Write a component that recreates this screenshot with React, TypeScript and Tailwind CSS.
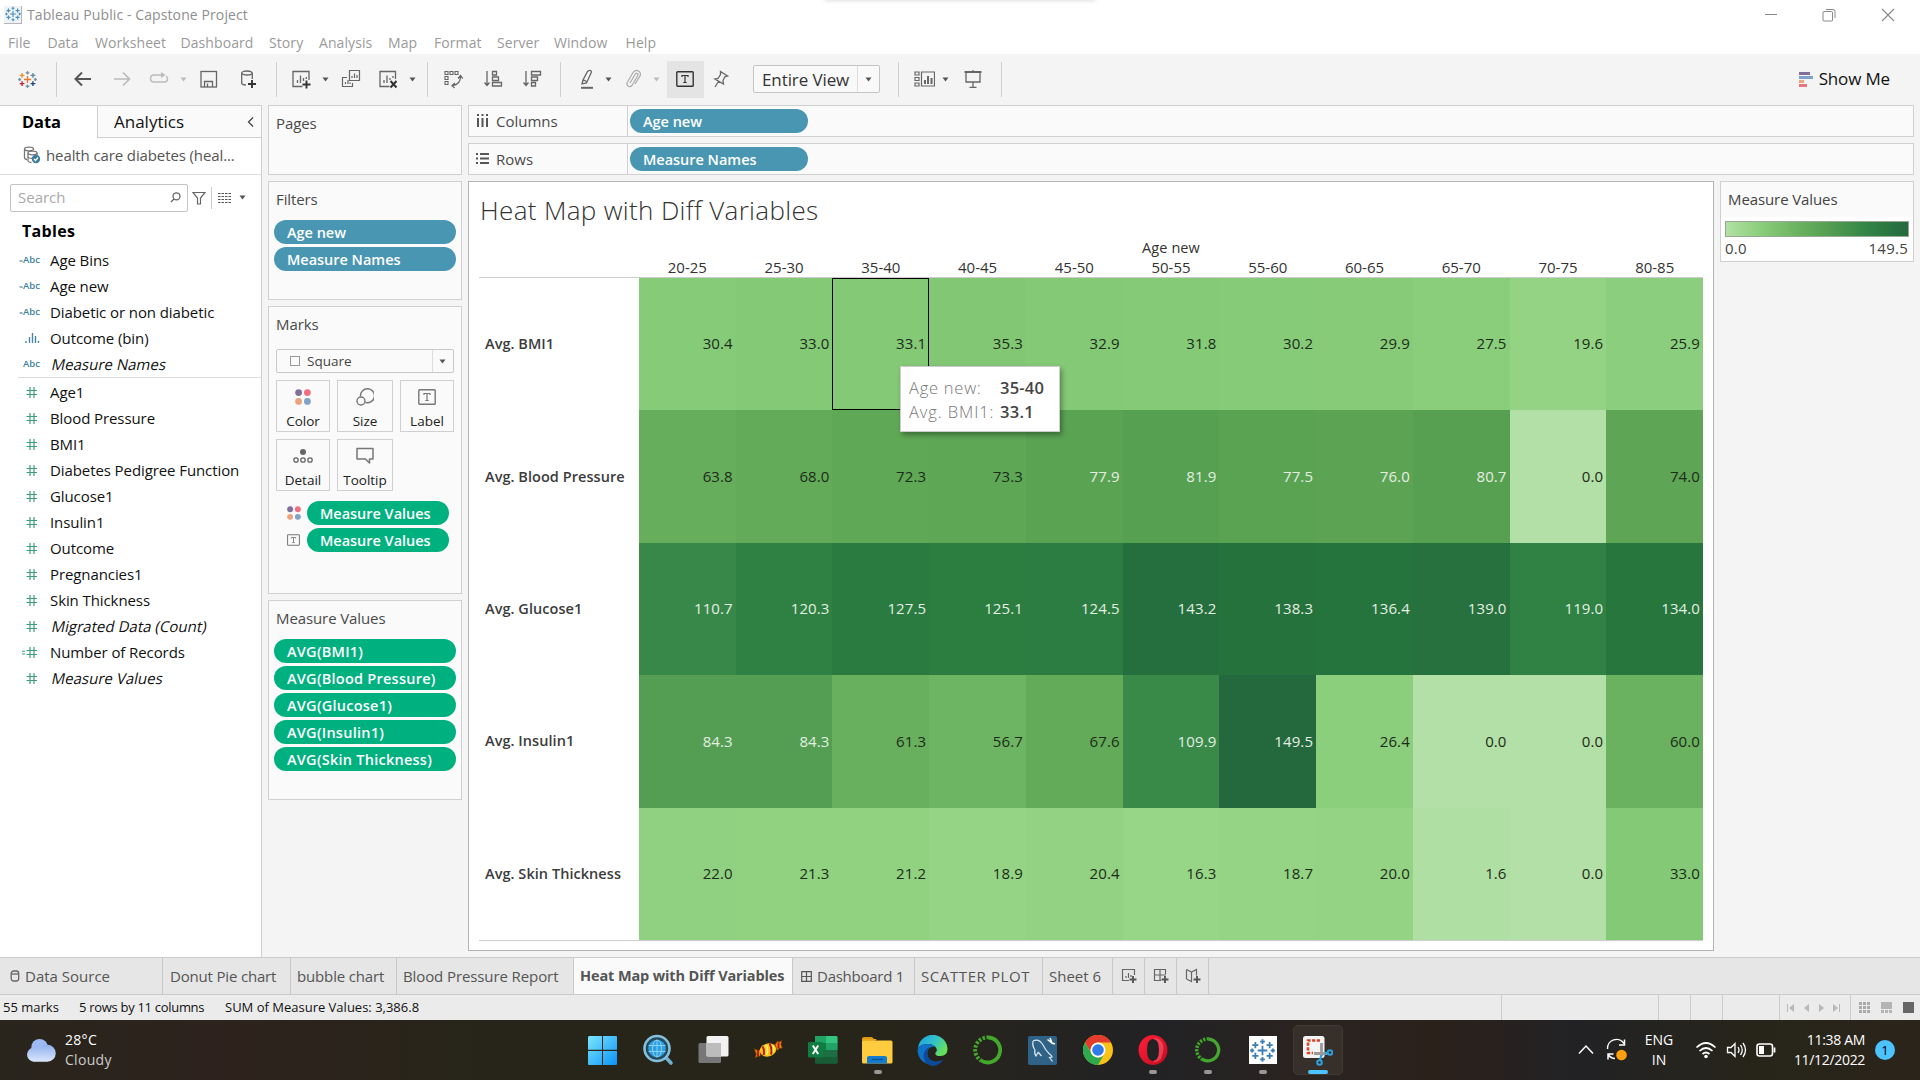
import React from "react";

type Kids = { children?: React.ReactNode };

/* ---------- data ---------- */
const ages = ["20-25", "25-30", "35-40", "40-45", "45-50", "50-55", "55-60", "60-65", "65-70", "70-75", "80-85"];
const rows: { name: string; v: number[] }[] = [
  { name: "Avg. BMI1", v: [30.4, 33.0, 33.1, 35.3, 32.9, 31.8, 30.2, 29.9, 27.5, 19.6, 25.9] },
  { name: "Avg. Blood Pressure", v: [63.8, 68.0, 72.3, 73.3, 77.9, 81.9, 77.5, 76.0, 80.7, 0.0, 74.0] },
  { name: "Avg. Glucose1", v: [110.7, 120.3, 127.5, 125.1, 124.5, 143.2, 138.3, 136.4, 139.0, 119.0, 134.0] },
  { name: "Avg. Insulin1", v: [84.3, 84.3, 61.3, 56.7, 67.6, 109.9, 149.5, 26.4, 0.0, 0.0, 60.0] },
  { name: "Avg. Skin Thickness", v: [22.0, 21.3, 21.2, 18.9, 20.4, 16.3, 18.7, 20.0, 1.6, 0.0, 33.0] },
];
const ramp = [
  "b3e0a6", "a5db96", "98d687", "8ed07f", "85ca77", "7dc370", "75bc69", "6eb663", "67af5c", "61a956",
  "59a253", "519c51", "49964f", "428f4d", "398949", "308344", "2b7c40", "27763d", "256f3d", "24693d",
];
function heat(v: number) {
  const t = (v / 149.5) * (ramp.length - 1);
  const i = Math.min(ramp.length - 2, Math.floor(t));
  const f = t - i;
  const ch = (h: string, k: number) => parseInt(h.slice(k * 2, k * 2 + 2), 16);
  const c = [0, 1, 2].map((k) => Math.round(ch(ramp[i], k) * (1 - f) + ch(ramp[i + 1], k) * f));
  return `rgb(${c.join(",")})`;
}

/* ---------- small pieces ---------- */
const Caret = ({ c = "#555" }: { c?: string }) => (
  <svg width="7" height="5" viewBox="0 0 7 5" className="shrink-0"><path d="M0.5 0.5h6L3.5 4.5z" fill={c} /></svg>
);
const Sep = () => <div className="h-[35px] w-px bg-[#cfcfcf]" />;
const Ico = ({ w = 20, h = 20, s = "#666", children }: Kids & { w?: number; h?: number; s?: string }) => (
  <svg width={w} height={h} viewBox={`0 0 ${w} ${h}`} fill="none" stroke={s} strokeWidth="1.3" className="shrink-0">{children}</svg>
);
const Pill = ({ cls, children }: Kids & { cls: string }) => (
  <div className={"flex h-6 items-center rounded-full pt-px text-[14.5px] font-semibold leading-6 tracking-[-0.02px] text-white " + cls}>{children}</div>
);
const Card = ({ cls, title, children }: Kids & { cls: string; title: string }) => (
  <div className={"border border-[#d0d0d0] bg-[#fafafa] " + cls}>
    <div className="h-[38px] pl-[7px] text-[15px] leading-[34px] tracking-[-0.1px] text-[#4a4a4a]">{title}</div>
    {children}
  </div>
);
const Dots = ({ w = 16 }: { w?: number }) => (
  <svg width={w} height={w} viewBox="0 0 16 16" className="shrink-0">
    <circle cx="3.6" cy="3.6" r="3.4" fill="#83709a" /><circle cx="12.4" cy="3.6" r="3.4" fill="#f0707f" />
    <circle cx="3.6" cy="12.4" r="3.4" fill="#eda47c" /><circle cx="12.4" cy="12.4" r="3.4" fill="#7fa3c9" />
  </svg>
);
const TBox = ({ w, h, c }: { w: number; h: number; c: string }) => (
  <svg width={w} height={h} viewBox="0 0 18 16" className="shrink-0" fill="none" stroke={c} strokeWidth="1.4">
    <rect x="0.8" y="0.8" width="16.4" height="14.4" rx="0.8" /><path d="M6 6V4.5h6V6M9 4.5v7M7.3 11.5h3.4" strokeWidth="1.2" />
  </svg>
);
const Plus = ({ x, y, c = "#333", s = 3.5 }: { x: number; y: number; c?: string; s?: number }) => (
  <path d={`M${x - s} ${y}h${s * 2}M${x} ${y - s}v${s * 2}`} stroke={c} strokeWidth="1.9" />
);
const crosses: [number, number, number, number][] = [
  [10.5, 10.5, 4, 0], [10.5, 3, 2, 1], [10.5, 18, 2, 1], [4.5, 6, 2.6, 2], [16.5, 6, 2.6, 3], [4.5, 15, 2.6, 4], [16.5, 15, 2.6, 5], [1.8, 10.5, 1.7, 1], [19.2, 10.5, 1.7, 1],
];
const logoCols = ["#e8762d", "#7299a6", "#eb9129", "#59879b", "#c72035", "#1f447e"];
const TableauMark = ({ size, mono }: { size: number; mono?: string }) => (
  <svg width={size} height={size} viewBox="0 0 21 21" className="shrink-0" strokeWidth="1.5">
    {crosses.map(([x, y, r, k], i) => <path key={i} d={`M${x - r} ${y}h${2 * r}M${x} ${y - r}v${2 * r}`} stroke={mono ?? logoCols[k]} />)}
  </svg>
);

const menu: [string, string][] = [
  ["File", "w-[39.5px]"], ["Data", "w-[47.5px]"], ["Worksheet", "w-[85.5px]"], ["Dashboard", "w-[88.5px]"], ["Story", "w-[50px]"],
  ["Analysis", "w-[69px]"], ["Map", "w-[46px]"], ["Format", "w-[63px]"], ["Server", "w-[57px]"], ["Window", "w-[71.5px]"], ["Help", "w-[50px]"],
];

function Toolbar() {
  const slot = "flex shrink-0 items-center justify-center ";
  return (
    <div className="flex h-[51px] items-center bg-[#f4f4f4] pb-px">
      <div className={slot + "w-[55px]"}><TableauMark size={19} /></div>
      <div className={slot + "w-[3px]"}><Sep /></div>
      <div className={slot + "w-[50px]"}><Ico s="#555"><path d="M18 10H3M9 3.500L2.500 10L9 16.500" strokeWidth="2" /></Ico></div>
      <div className={slot + "w-[28px]"}><Ico s="#bbb"><path d="M2 10h15M11 3.500L17.500 10L11 16.500" strokeWidth="1.700" /></Ico></div>
      <div className={slot + "ml-1 w-[38px]"}><Ico s="#bbb"><path d="M13 6H5Q1.500 6 1.500 9.500T5 13H15.500Q18.500 13 18.500 9.500Q18.500 8 17 7" strokeWidth="1.500" /><path d="M12 3l4.500 3L12 9z" fill="#bbb" stroke="none" /></Ico></div>
      <div className={slot + "w-[10px]"}><Caret c="#bbb" /></div>
      <div className={slot + "w-[42px]"}><Ico><rect x="2" y="2.500" width="15.500" height="15.500" /><path d="M5.500 18v-5.500h8V18M8.500 18v-3.500" /></Ico></div>
      <div className={slot + "w-[35px]"}><Ico><ellipse cx="9" cy="4" rx="5.300" ry="2" /><path d="M3.700 4v10.500Q4.500 16 8 16M14.300 4v6" /><Plus x={14} y={15} s={4} /></Ico></div>
      <div className={slot + "w-[22px]"}><Sep /></div>
      <div className={slot + "w-[27px]"}><Ico><path d="M18 11V2.500H2v15h9.500M6.500 14v-3M9.500 14V6.500M12.500 12V9M15.300 10V8" /><Plus x={15.500} y={15.500} s={4} /></Ico></div>
      <div className={slot + "w-[23px]"}><Caret /></div>
      <div className={slot + "w-[28px]"}><Ico><path d="M8.500 1.500h10v10h-10zM6 8.500H1.500v9h10V14M11 9V7M13.500 9V4.500M16 9V6M4.500 15v-2M7 15v-4M9 15v-1.500" strokeWidth="1.200" /></Ico></div>
      <div className={slot + "w-[45px]"}><Ico><path d="M17.500 10V2.500H2v15h9.500M6 14v-3M9 14V6.500M12 11V9M15 9V7" /><path d="M12.500 12l6 6.500M18.500 12l-6 6.500" stroke="#333" strokeWidth="2" /></Ico></div>
      <div className={slot + "w-[5px]"}><Caret /></div>
      <div className={slot + "w-[25px]"}><Sep /></div>
      <div className={slot + "w-[26px]"}><Ico><path d="M2 2.500h3v3H2zM7 2.500h3v3H7zM12 2.500h3v3h-3zM2 7.500h3v3H2zM2 12.500h3v3H2z" strokeWidth="1.100" /><path d="M17.500 7.500Q17.500 15.500 9.500 16.500M15 9.500l2.500-3l2.300 3M12 14l-3 2.500l2.500 2.500" /></Ico></div>
      <div className={slot + "w-[54px]"}><Ico><path d="M4 2v14M1.500 13.500L4 16.500l2.500-3M9.500 2.500h4v3.500h-4zM9.500 8h6v3.500h-6zM9.500 13.500h9V17h-9z" /></Ico></div>
      <div className={slot + "w-[24px]"}><Ico><path d="M4 2v14M1.500 13.500L4 16.500l2.500-3M9.500 2.500h9V6h-9zM9.500 8h6v3.500h-6zM9.500 13.500h4V17h-4z" /></Ico></div>
      <div className={slot + "w-[33px]"}><Sep /></div>
      <div className={slot + "w-[20px]"}><Ico><path d="M10.500 2.500q3-2.500 4 .5L9.500 14l-4.500 1l1-4zM6 10.500l3.500 2" /><path d="M4 18.800h12" strokeWidth="2" /></Ico></div>
      <div className={slot + "w-[23px]"}><Caret /></div>
      <div className={slot + "w-[26px]"}><Ico s="#aaa"><path d="M7 14l5-8.500q1-2 2.300-1t.3 2.500L9 16.500q-2 2-4 .5t-.5-4L10 3.500q2.500-3.500 5.500-1.500t1.500 5L12 15" strokeWidth="1.200" /></Ico></div>
      <div className={slot + "w-[21px]"}><Caret c="#bbb" /></div>
      <div className={slot + "h-[37px] w-[37px] bg-[#e4e4e4] pr-[2px]"}><TBox w={18} h={16} c="#333" /></div>
      <div className={slot + "w-[34px] pr-[2px]"}><Ico><path d="M10.500 2.500l7 4.500l-2.500.5l-2 4l.5 3.500L5 10l3-.5l2.500-4zM8.500 12.500L5 18" /></Ico></div>
      <div className="ml-[15px] flex h-7 w-[127px] items-center rounded-[2px] border border-[#c4c4c4] bg-[#f9f9f9]">
        <div className="h-full w-[104px] border-r border-[#ddd] pl-2 text-[17px] leading-[28px] tracking-[-0.1px] text-[#333]">Entire View</div>
        <div className="flex flex-1 justify-center"><Caret /></div>
      </div>
      <div className={slot + "w-[36px]"}><Sep /></div>
      <div className={slot + "w-[16px]"}><Ico w={21}><path d="M1 3h4v3H1zM1 8.500h4v3H1zM1 14h4v3H1zM7.500 3h13v14h-13z" strokeWidth="1.200" /><path d="M11 15v-4M14 15V7M17.500 15V9" strokeWidth="2" /></Ico></div>
      <div className={slot + "w-[27px]"}><Caret /></div>
      <div className={slot + "w-[27px]"}><Ico><path d="M1.500 3h17" strokeWidth="2" /><path d="M3 4v9h14V4M10 13v5M6.500 18.300h7M10 1v2" /></Ico></div>
      <div className={slot + "w-[31px]"}><Sep /></div>
      <div className="ml-auto flex items-center gap-[6px] pr-[30px]">
        <svg width="14" height="15" viewBox="0 0 14 15"><path d="M0 0h11v3H0z" fill="#83709a" /><path d="M0 4h14v3H0z" fill="#7fa3c9" /><path d="M0 8h5v3H0z" fill="#eda47c" /><path d="M0 12h8v3H0z" fill="#e8747f" /></svg>
        <span className="text-[17px] leading-5 tracking-[-0.15px] text-[#111]">Show Me</span>
      </div>
    </div>
  );
}

const fieldRows: [string, string][] = [
  ["=Abc", "Age Bins"], ["=Abc", "Age new"], ["=Abc", "Diabetic or non diabetic"], ["bin", "Outcome (bin)"], ["Abc", "Measure Names"],
  ["#", "Age1"], ["#", "Blood Pressure"], ["#", "BMI1"], ["#", "Diabetes Pedigree Function"], ["#", "Glucose1"], ["#", "Insulin1"],
  ["#", "Outcome"], ["#", "Pregnancies1"], ["#", "Skin Thickness"], ["#", "Migrated Data (Count)"], ["=#", "Number of Records"], ["#", "Measure Values"],
];
const italics = ["Measure Names", "Migrated Data (Count)", "Measure Values"];

function FieldRow({ type, name }: { type: string; name: string }) {
  return (
    <div className="flex h-[26px] items-center">
      <div className="flex w-[41px] justify-end pr-px text-[9.500px] font-semibold leading-3 text-[#3f7f9e]">
        {type.endsWith("Abc") && <span>{type.startsWith("=") && <span className="text-[7px]">=</span>}Abc</span>}
        {type === "bin" && <Ico w={15} h={10} s="#4a87a4"><path d="M1 10V8M4.500 10V4M7.500 10V0M10.500 10V3M13.500 10V8" strokeWidth="1.400" /></Ico>}
        {type.endsWith("#") && (
          <Ico w={18} h={11} s="#3d9c80">{type === "=#" && <path d="M0 4.300h3M0 7h3" strokeWidth="1" />}<path d="M4.500 3.500h10.500M4.500 7.500h10.500M8 0v11M12 0v11" strokeWidth="1.200" /></Ico>
        )}
      </div>
      <div className={"ml-[9px] whitespace-nowrap text-[15px] leading-5 text-[#111] " + (italics.includes(name) ? "origin-center -skew-x-12 pl-[2px] tracking-[0.02px]" : "tracking-[-0.09px]")}>{name}</div>
    </div>
  );
}

function DataPane() {
  return (
    <div className="flex w-[262px] shrink-0 flex-col border-r border-t border-[#cfcfcf] bg-white">
      <div className="flex h-8">
        <div className="w-[97px] pl-[22px] text-[16.500px] font-bold leading-[31px] tracking-[-0.1px] text-black">Data</div>
        <div className="flex flex-1 items-center justify-between border-b border-l border-[#cfcfcf] bg-[#fafafa] pl-4 pr-[6px]">
          <span className="text-[17px] leading-8 text-[#111]">Analytics</span>
          <Ico w={8} h={12} s="#444"><path d="M6 1.500L1.500 6L6 10.500" /></Ico>
        </div>
      </div>
      <div className="flex h-[37px] items-center border-b border-[#ddd] pb-[2px] pl-[23px]">
        <Ico w={18} h={18} s="#777"><ellipse cx="6" cy="3" rx="4.500" ry="1.800" /><path d="M1.500 3v9q.5 1.500 2.500 1.500M5 7v8q1 1.500 3.500 1.500M14 7v3" /><ellipse cx="9.500" cy="7" rx="4.500" ry="1.800" /><path d="M5 11q1 1.500 4.500 1.500" /><circle cx="13" cy="13" r="4.200" fill="#3a7ca0" stroke="none" /><path d="M11 13l1.500 1.500L15 11.500" stroke="#fff" /></Ico>
        <span className="ml-[5px] whitespace-nowrap text-[15px] leading-5 tracking-[-0.11px] text-[#555]">health care diabetes (heal...</span>
      </div>
      <div className="flex h-[45px] items-center pl-[10px]">
        <div className="flex h-7 w-[178px] items-center justify-between rounded-[2px] border border-[#c4c4c4] pl-[7px] pr-[6px]">
          <span className="pb-px text-[15px] leading-6 text-[#aaa]">Search</span>
          <Ico w={11} h={11}><circle cx="6.500" cy="4.300" r="3.500" /><path d="M4 7L1 10" /></Ico>
        </div>
        <div className="ml-1 flex"><Ico w={14} h={14}><path d="M1 1.500h12L8.500 7v6h-3V7z" strokeWidth="1.200" /></Ico></div>
        <div className="ml-[5px] h-[22px] w-px bg-[#ccc]" />
        <div className="ml-[6px] flex"><Ico w={13} h={10} s="#555"><path d="M0 .5h13M0 3.500h13M0 6.500h13M0 9.500h13" strokeWidth="1" strokeDasharray="2.500 1" /></Ico></div>
        <div className="ml-2 flex"><Caret /></div>
      </div>
      <div className="h-[27px] pl-[22px] text-[16px] font-bold leading-[16px] tracking-[0.3px] text-black"><div className="pt-[3px]">Tables</div></div>
      {fieldRows.slice(0, 5).map(([t, n]) => <FieldRow key={n} type={t} name={n} />)}
      <div className="ml-[18px] border-b border-[#ddd]" />
      <div className="h-px" />
      {fieldRows.slice(5).map(([t, n]) => <FieldRow key={n} type={t} name={n} />)}
    </div>
  );
}

const MarkBtn = ({ cls, label, children }: Kids & { cls: string; label: string }) => (
  <div className={"flex h-[52px] flex-col items-center justify-between border border-[#d0d0d0] pb-[2px] pt-[7px] " + cls}>
    <div className="flex h-[18px] items-center">{children}</div>
    <div className="text-[13.500px] leading-[16px] text-[#222]">{label}</div>
  </div>
);

function Cards() {
  return (
    <div className="flex w-[206px] shrink-0 flex-col gap-[6px] pl-[6px] pr-[6px]">
      <Card title="Pages" cls="h-[70px]" />
      <Card title="Filters" cls="h-[119px]">
        <div className="flex flex-col gap-[3px] px-[5px]">
          <Pill cls="bg-[#4996b2] pl-[13px]">Age new</Pill>
          <Pill cls="bg-[#4996b2] pl-[13px]">Measure Names</Pill>
        </div>
      </Card>
      <Card title="Marks" cls="h-[288px]">
        <div className="px-[7px] pt-1">
          <div className="flex h-6 w-[178px] items-center rounded-[2px] border border-[#c8c8c8] bg-[#fafafa]">
            <div className="ml-[13px] h-[10px] w-[10px] border border-[#999]" />
            <div className="ml-[7px] w-[125px] text-[13.500px] leading-[22px] text-[#444]">Square</div>
            <div className="flex h-full flex-1 items-center justify-center border-l border-[#ddd] pr-px"><Caret /></div>
          </div>
          <div className="mt-[7px] flex justify-between">
            <MarkBtn cls="w-[54px]" label="Color"><Dots /></MarkBtn>
            <MarkBtn cls="w-[56px]" label="Size"><Ico w={18} h={18} s="#777"><path d="M4.500 8.500A7 7 0 1 1 9.500 14.500" strokeWidth="1.400" /><circle cx="5" cy="13" r="4" strokeWidth="1.400" /></Ico></MarkBtn>
            <MarkBtn cls="w-[54px]" label="Label"><TBox w={18} h={16} c="#777" /></MarkBtn>
          </div>
          <div className="mt-[7px] flex gap-[7px]">
            <MarkBtn cls="w-[54px]" label="Detail"><Ico w={20} h={15} s="#666"><circle cx="10" cy="3" r="3" fill="#666" stroke="none" /><circle cx="3" cy="11" r="2.200" /><circle cx="10" cy="11" r="2.200" /><circle cx="17" cy="11" r="2.200" /></Ico></MarkBtn>
            <MarkBtn cls="w-[56px]" label="Tooltip"><Ico w={18} h={18} s="#777"><path d="M1 1.500h16v10.500h-3.500v4L9.500 12H1z" strokeWidth="1.500" strokeLinejoin="round" /></Ico></MarkBtn>
          </div>
          <div className="mt-[10px] flex flex-col gap-[3px] pl-[11px]">
            <div className="flex items-center"><Dots w={14} /><Pill cls="ml-[6px] w-[142px] bg-[#00b180] pl-[13px]">Measure Values</Pill></div>
            <div className="flex items-center"><div className="w-[14px]"><TBox w={13} h={12} c="#777" /></div><Pill cls="ml-[6px] w-[142px] bg-[#00b180] pl-[13px]">Measure Values</Pill></div>
          </div>
        </div>
      </Card>
      <Card title="Measure Values" cls="h-[200px]">
        <div className="flex flex-col gap-[3px] px-[5px]">
          {["AVG(BMI1)", "AVG(Blood Pressure)", "AVG(Glucose1)", "AVG(Insulin1)", "AVG(Skin Thickness)"].map((t) => (
            <Pill key={t} cls="bg-[#00b180] pl-[13px]"><span className="tracking-[0.25px]">{t}</span></Pill>
          ))}
        </div>
      </Card>
    </div>
  );
}

const Shelf = ({ label, pill, children }: Kids & { label: string; pill: string }) => (
  <div className="flex h-8 items-center border border-[#d0d0d0] bg-[#fafafa]">
    <div className="flex h-full w-[159px] items-center border-r border-[#d0d0d0] pl-[7px]">
      {children}<span className="ml-[7px] text-[15px] leading-8 text-[#4a4a4a]">{label}</span>
    </div>
    <Pill cls="ml-[2px] w-[178px] bg-[#4996b2] pl-[13px]">{pill}</Pill>
  </div>
);

function HeatMap() {
  return (
    <div className="h-[770px] w-[1246px] shrink-0 border border-[#b4b4b4] bg-white pl-[10px] text-[#333]">
      <div className="pl-px pt-[11px] text-[26px] font-light leading-[34px] tracking-[0.34px] text-[#333]">Heat Map with Diff Variables</div>
      <div className="relative mt-[11px] w-[1224px]">
        <div className="pl-[160px] text-center text-[14.500px] leading-[19px] tracking-[0.1px]">Age new</div>
        <div className="flex border-b border-[#ccc] pl-[160px]">
          {ages.map((a) => <div key={a} className="h-5 flex-1 text-center text-[15px] leading-[20px]">{a}</div>)}
        </div>
        {rows.map((r, ri) => (
          <div key={r.name} className="flex h-[132.400px]">
            <div className="flex w-[160px] shrink-0 items-center whitespace-nowrap pl-[6px] text-[14.500px] font-semibold tracking-[0.05px] text-[#3c3c3c]">{r.name}</div>
            <div className="grid flex-1 grid-cols-11">
              {r.v.map((v, ci) => (
                <div
                  key={ci}
                  className={"relative flex items-center justify-end pb-px pr-[3px] text-[15px] tracking-[0.1px] " + (v > 74.5 ? "text-[#e4efe2]" : "text-[#1d2b1a]") + (ri === 0 && ci === 2 ? " outline outline-[1.500px] -outline-offset-1 outline-black" : "")}
                  style={{ backgroundColor: heat(v) }}
                >
                  {v.toFixed(1)}
                </div>
              ))}
            </div>
          </div>
        ))}
        <div className="border-b border-[#ccc]" />
        <div className="absolute left-[421px] top-[128px] flex h-[66px] w-[160px] flex-col justify-center border border-[#ccc] bg-white pl-2 pt-px text-[16.500px] leading-6 shadow-[2px_3px_5px_rgba(0,0,0,0.35)]">
          <div className="flex"><span className="w-[91px] font-light tracking-[0.75px] text-[#777]">Age new:</span><span className="font-semibold tracking-[0.2px] text-[#444]">35-40</span></div>
          <div className="flex"><span className="w-[91px] whitespace-nowrap font-light tracking-[0.9px] text-[#777]">Avg. BMI1:</span><span className="font-semibold tracking-[0.3px] text-[#444]">33.1</span></div>
        </div>
      </div>
    </div>
  );
}

const Tab = ({ cls, children }: Kids & { cls: string }) => (
  <div className={"flex items-center whitespace-nowrap border-r border-[#c8c8c8] " + cls}>{children}</div>
);

function SheetTabs() {
  return (
    <div className="flex h-[38px] border-b border-t border-[#cbcbcb] bg-[#e6e6e6] text-[15px] text-[#555]">
      <Tab cls="w-[163px] pl-[10px]"><Ico w={10} h={12} s="#666"><rect x="1.200" y="1" width="7.500" height="10" rx="2.500" /><path d="M1.500 4h7" /></Ico><span className="ml-[5px]">Data Source</span></Tab>
      <Tab cls="w-[128px] pl-[7px] tracking-[-0.18px]">Donut Pie chart</Tab>
      <Tab cls="w-[106px] pl-[6px] tracking-[-0.15px]">bubble chart</Tab>
      <Tab cls="w-[177px] pl-[6px] tracking-[-0.1px]">Blood Pressure Report</Tab>
      <Tab cls="w-[219px] bg-[#fafafa] pb-px pl-[6px] text-[14.500px] font-bold tracking-[-0.12px]">Heat Map with Diff Variables</Tab>
      <Tab cls="w-[122px] pl-[8px]"><Ico w={11} h={11} s="#555"><path d="M.7.7h9.600v9.600H.7zM5.500.7v9.600M.7 5.500h9.600" strokeWidth="1.200" /></Ico><span className="ml-[5px] tracking-[-0.25px]">Dashboard 1</span></Tab>
      <Tab cls="w-[128px] pl-[6px] tracking-[0.600px]">SCATTER PLOT</Tab>
      <Tab cls="w-[70px] pl-[6px]">Sheet 6</Tab>
      <Tab cls="w-8 justify-center"><Ico w={16} h={16}><path d="M13.500 7V1.500H1.500v11H8M5 10V8M7.500 10V5M10 9V7" strokeWidth="1.200" /><Plus x={12} y={11.500} c="#555" s={3.500} /></Ico></Tab>
      <Tab cls="w-8 justify-center"><Ico w={16} h={16}><path d="M12.500 6V1.500H1.500v11H8M7 1.500v11M1.500 7H13" strokeWidth="1.200" /><Plus x={12} y={11.500} c="#555" s={3.500} /></Ico></Tab>
      <Tab cls="w-8 justify-center"><Ico w={16} h={16}><path d="M1.500 1.500L6.500 4l5-2.500v6M1.500 1.500V11l5 2.500V4" strokeWidth="1.200" /><Plus x={12} y={11.500} c="#555" s={3.500} /></Ico></Tab>
    </div>
  );
}

function StatusBar() {
  const c = "#b8b8b8";
  return (
    <div className="flex h-[25px] items-center bg-[#ebebeb] text-[13px] leading-[25px] text-[#111]">
      <div className="w-[76px] pl-[3px]">55 marks</div>
      <div className="w-[146px] pl-[3px] tracking-[-0.3px]">5 rows by 11 columns</div>
      <div className="w-[1279px] pl-[3px]">SUM of Measure Values: 3,386.8</div>
      <div className="h-full w-[157px] border-l border-[#ccc]" />
      <div className="h-full w-8 border-l border-[#ccc]" />
      <div className="h-full w-8 border-l border-[#ccc]" />
      <div className="h-full w-[57px] border-l border-[#ccc]" />
      <div className="flex h-full w-[71px] items-center justify-center gap-[9px] border-l border-[#ccc] pr-[3px]">
        <svg width="7" height="8" viewBox="0 0 7 8"><path d="M0 0h1v8H0zM7 0v8L2 4z" fill={c} /></svg>
        <svg width="5" height="8" viewBox="0 0 5 8" className="ml-px"><path d="M5 0v8L0 4z" fill={c} /></svg>
        <svg width="5" height="8" viewBox="0 0 5 8" className="ml-px"><path d="M0 0v8L5 4z" fill={c} /></svg>
        <svg width="7" height="8" viewBox="0 0 7 8"><path d="M6 0h1v8H6zM0 0v8L5 4z" fill={c} /></svg>
      </div>
      <div className="flex h-full flex-1 items-center gap-[11px] border-l border-[#ccc] pl-[8px]">
        <svg width="11" height="11" viewBox="0 0 11 11">{[0, 4, 8].map((y) => [0, 4, 8].map((x) => <rect key={x + "-" + y} x={x} y={y} width="3" height="3" fill="#aaa" />))}</svg>
        <svg width="11" height="11" viewBox="0 0 11 11"><path d="M0 0h11v7H0zM0 8h3v3H0zM4 8h3v3H4zM8 8h3v3H8z" fill="#b4b4b4" /></svg>
        <svg width="11" height="11" viewBox="0 0 11 11"><path d="M0 0h11v11H0z" fill="#666" /></svg>
      </div>
    </div>
  );
}

/* ---------- taskbar ---------- */
const App55 = ({ dot, active, children }: Kids & { dot?: boolean; active?: boolean }) => (
  <div className="flex w-[55px] justify-center">
    <div className={"relative flex h-[50px] w-[50px] items-center justify-center rounded-[5px] " + (active ? "border border-[#403a33] bg-[#37302a]" : "")}>
      {children}
      {dot && <div className="absolute bottom-[1px] left-[21px] h-1 w-2 rounded-full bg-[#9a9894]" />}
      {active && <div className="absolute bottom-0 left-[14px] h-1 w-5 rounded-full bg-[#4cc2ff]" />}
    </div>
  </div>
);
const Anaconda = ({ s }: { s: number }) => (
  <svg width={s} height={s} viewBox="0 0 32 32" fill="none">
    <path d="M17 3.500A12.500 12.500 0 1 1 9 26.500" stroke="#44a82d" strokeWidth="3.800" />
    <path d="M17 3.500A12.500 12.500 0 0 0 9 26.500" stroke="#44a82d" strokeWidth="4" strokeDasharray="2.500 1.500" />
    <path d="M16 5.500A11 11 0 0 0 8 23" stroke="#26261a" strokeWidth="1" strokeDasharray="1.500 2.500" />
  </svg>
);

function Taskbar() {
  return (
    <div className="flex h-[60px] items-center bg-[linear-gradient(90deg,#29251d_0%,#2e221d_12%,#272519_25%,#272519_45%,#222225_60%,#2a2320_68%,#2b211b_75%,#222225_82%,#272519_92%,#2b241a_100%)] text-white">
      <div className="flex w-[575px] shrink-0 items-center pl-[26px]">
        <svg width="30" height="25" viewBox="0 0 31 25">
          <defs><linearGradient id="cl" x1="0" y1="0" x2="0" y2="1"><stop offset="0" stopColor="#8fb0ee" /><stop offset="1" stopColor="#dbe7fb" /></linearGradient></defs>
          <circle cx="14" cy="9" r="8.500" fill="#9dbbf2" /><path d="M7.500 24a7.300 7.300 0 0 1 0-14.500q4-.5 6 2q2.500-5 8.500-5a8.700 8.700 0 0 1 0 17.500z" fill="url(#cl)" />
        </svg>
        <div className="ml-[9px] text-[14px] leading-5 tracking-[0.3px]"><div>28°C</div><div className="text-[#ccc]">Cloudy</div></div>
      </div>
      <App55><svg width="29" height="29" viewBox="0 0 29 29"><defs><linearGradient id="wn" x1="0" y1="0" x2="1" y2="1"><stop offset="0" stopColor="#7ce6ff" /><stop offset="1" stopColor="#0a93f5" /></linearGradient></defs><path d="M1 0h13v13.700H0V1zM15 0h13q1 0 1 1v12.700H15zM0 15h14v14H1q-1 0-1-1zM15 15h14v13q0 1-1 1H15z" fill="url(#wn)" /></svg></App55>
      <App55><svg width="32" height="32" viewBox="0 0 32 32" fill="none"><path d="M23 22.500L29 29" stroke="#6fb0d0" strokeWidth="3.600" strokeLinecap="round" /><circle cx="15" cy="14.500" r="12.500" fill="#244a5c" stroke="#84bfdb" strokeWidth="2.600" /><circle cx="15" cy="14.500" r="8.800" fill="#2f9fe0" /><path d="M15 6v17M6.500 11.500h17M6.500 17.500h17" stroke="#8fd6f8" strokeWidth=".9" /><ellipse cx="15" cy="14.500" rx="4.500" ry="8.500" stroke="#8fd6f8" strokeWidth=".9" /></svg></App55>
      <App55><svg width="32" height="32" viewBox="0 0 32 32"><rect x="1.500" y="9" width="22.500" height="20" rx="1.500" fill="#777" /><rect x="9.500" y="2" width="22" height="20.500" rx="1.500" fill="#f2f2f2" /><path d="M9.500 9H24v13.500H11q-1.500 0-1.500-1.500z" fill="#bcbcbc" /></svg></App55>
      <App55><svg width="30" height="22" viewBox="0 0 30 22"><path d="M1 9.500l3 1.500l3.500 0v6L4.500 17.500L2 19l1.200-4zM22 5.500l2.500-3.500l1.500 1L29 1.500l-1 4l1.500 3.500l-3 .5l-2.500 2z" fill="#f08c10" stroke="#6b2d00" strokeWidth=".8" /><ellipse cx="15" cy="11" rx="8.300" ry="6.500" fill="#ffc31c" transform="rotate(-14 15 11)" /><path d="M9.500 7.500q2.500 4 1 8.500M16.500 4.500q3 5 1.500 11M5 11v6M25.500 3.500v6" stroke="#b01a08" strokeWidth="1.900" fill="none" /><path d="M13 6q2.500 4 .5 10M20 6q1.500 3 .5 7" stroke="#fff06a" strokeWidth="1.700" fill="none" /></svg></App55>
      <App55><svg width="30" height="28" viewBox="0 0 30 28"><rect x="7" width="22.500" height="27.500" rx="1.500" fill="#1d6f43" /><path d="M7 0h11v7H7z" fill="#21a366" /><path d="M18 0h10q1.500 0 1.500 1.500V7H18z" fill="#33c481" /><path d="M18 7h11.500v7H18z" fill="#21a366" /><path d="M7 7h11v7H7z" fill="#107c41" /><path d="M7 21h22.500v5q0 1.500-1.500 1.500H8.500Q7 27.500 7 26z" fill="#185c37" /><rect y="6" width="15" height="15.500" rx="1.200" fill="#107c41" /><path d="M4.800 9.500l5.400 8.500M10.200 9.500L4.800 18" stroke="#fff" strokeWidth="2" /></svg></App55>
      <App55 dot><svg width="31" height="27" viewBox="0 0 31 27"><path d="M0 2q0-2 2-2h8l3.500 3.500V10H0z" fill="#dc9a13" /><rect y="3.500" width="30.500" height="23" rx="1.500" fill="#ffcb3f" /><path d="M0 3.500h13l2-1.500H0z" fill="#e9a820" /><path d="M5 26.500V21q0-2 2-2h16q2 0 2 2v5.500z" fill="#157bcd" /><path d="M10 22.500h11" stroke="#0b4f8f" strokeWidth="1.300" /></svg></App55>
      <App55><svg width="31" height="31" viewBox="0 0 31 31"><defs><linearGradient id="e1" x1="0" y1="0" x2="1" y2=".5"><stop offset="0" stopColor="#1ba0e8" /><stop offset=".6" stopColor="#35c3c4" /><stop offset="1" stopColor="#66e05a" /></linearGradient></defs><path d="M1 13A14.800 14.800 0 0 1 30.500 14q0 7-7 7q-6 0-5-3.500q2-1 1-4Q17 9 11 9Q4 9 1 13z" fill="url(#e1)" /><path d="M1 13q3-4 10-4q5 0 7 3q-6-1-7.500 4.500T15 26q5 2 11-1a14.800 14.800 0 0 1-25.500-9z" fill="#0f72c9" /><path d="M10.500 16q-1 5 3 9t12.500 0q-5 7-12.500 5.500Q5 27 7 18q1-4 6-6q-2 1.500-2.500 4z" fill="#0c4a9b" /></svg></App55>
      <App55><Anaconda s={32} /></App55>
      <App55><svg width="29" height="29" viewBox="0 0 29 29" fill="none"><rect width="29" height="29" rx="2" fill="#2e6286" /><path d="M5 5q6-3 10 4q3 6 6 8.500q3 2 3 3.500l-2.500.5l3 4M5 5q-1 5 2 9q-1 4 1 6l2-3.500M10 16l3.500 4" stroke="#dce8f0" strokeWidth="1.200" /><path d="M19.500 3.500l5 4M22 2l2 5l3 1" stroke="#fff" strokeWidth="1.600" /></svg></App55>
      <App55><svg width="30" height="30" viewBox="0 0 30 30"><circle cx="15" cy="15" r="15" fill="#fbc116" /><path d="M2 7.500A15 15 0 0 1 28 7.500H15a7.500 7.500 0 0 0-6.800 10.500z" fill="#e33b2e" /><path d="M2 7.500A15 15 0 0 0 15 30l6.500-11.200A7.500 7.500 0 0 1 8.500 18.800z" fill="#2da94f" /><circle cx="15" cy="15" r="7.500" fill="#fff" /><circle cx="15" cy="15" r="5.800" fill="#2f7bea" /></svg></App55>
      <App55 dot><svg width="30" height="30" viewBox="0 0 30 30"><defs><linearGradient id="op" x1="0" y1="0" x2="1" y2="1"><stop offset="0" stopColor="#ff2038" /><stop offset="1" stopColor="#c40b20" /></linearGradient></defs><path fillRule="evenodd" d="M15 0a14.500 15 0 1 0 .01 0zM15 4q6 0 6 11t-6 11q-6 0-6-11t6-11z" fill="url(#op)" /><path d="M15 4q3-2.500 8 2t0 18q-4.500 4.500-8 2q6 0 6-11t-6-11z" fill="#ff6a76" opacity=".5" /></svg></App55>
      <App55 dot><Anaconda s={28} /></App55>
      <App55 dot><div className="flex h-7 w-7 items-center justify-center bg-white"><TableauMark size={25} mono="#3b7fb5" /></div></App55>
      <App55 active><svg width="30" height="31" viewBox="0 0 30 31" fill="none"><rect y="1" width="21.500" height="22" rx="2.500" fill="#f4f4f4" /><path d="M17 5.500H5V18h5" stroke="#d64526" strokeWidth="2.600" strokeDasharray="3.200 1.500" /><path d="M18.500 8v13M11 18.500h13" stroke="#9a9a9a" strokeWidth="2.800" /><path d="M18.500 20l-1.500 5M22 18.500l3-.5" stroke="#2ba3e0" strokeWidth="2.300" /><circle cx="16.500" cy="27.500" r="2.300" stroke="#2ba3e0" strokeWidth="2" /><circle cx="27" cy="17.500" r="2.300" stroke="#2ba3e0" strokeWidth="2" /></svg></App55>
      <div className="ml-auto flex items-center text-[14px] leading-5">
        <Ico w={16} h={12} s="#fff"><path d="M1 9.500L8 2L15 9.500" strokeWidth="1.500" /></Ico>
        <div className="ml-[12px] flex"><Ico w={22} h={24} s="#fff"><path d="M1.500 11A9 9 0 0 1 18 5.500M18.500 1.500V7H13M2 21.500V16h5.500M2 16.500Q5 20.500 9 20.500" strokeWidth="1.500" /><circle cx="15.500" cy="17" r="5.300" fill="#ff9f0d" stroke="none" /></Ico></div>
        <div className="ml-[13px] w-9 text-center"><div>ENG</div><div>IN</div></div>
        <div className="ml-[18px] flex"><Ico w={22} h={18} s="#fff"><path d="M1.500 6.500q9.500-9 19 0M4.500 10q6.500-6 13 0M7.500 13q3.500-3 7 0" strokeWidth="1.700" /><circle cx="11" cy="15.500" r="1.800" fill="#fff" stroke="none" /></Ico></div>
        <div className="ml-[9px] flex"><Ico w={21} h={18} s="#fff"><path d="M1.500 6.500h3.500L9 2.500v13L5 11.500H1.500zM12 6q2 3 0 6M14.500 4q3.500 5 0 10M17 2q5 7 0 14" strokeWidth="1.300" /></Ico></div>
        <div className="ml-[9px] flex"><Ico w={20} h={14} s="#fff"><rect x="1" y="1" width="15.500" height="12" rx="2.500" strokeWidth="1.600" /><rect x="3" y="3" width="5" height="8" fill="#fff" stroke="none" /><path d="M18.500 4.500v5" strokeWidth="1.800" /></Ico></div>
        <div className="w-[89px] text-right tracking-[-0.320px]"><div>11:38 AM</div><div>11/12/2022</div></div>
        <div className="ml-[10px] mr-[25px] flex h-5 w-5 items-center justify-center rounded-full bg-[#4cc2ff] text-[13px] text-black">1</div>
      </div>
    </div>
  );
}

export default function App() {
  return (
    <div className="flex h-[1080px] w-[1920px] flex-col overflow-hidden bg-[#f4f4f4] font-['Open_Sans',sans-serif]">
      <div className="relative flex h-[29px] items-center bg-white pl-1">
        <div className="absolute left-[825px] top-[-6px] h-[6px] w-[270px] shadow-[0_0_5px_rgba(0,0,0,0.18)]" />
        <div className="flex h-[18px] w-[18px] items-center justify-center border-b border-r border-[#b5b5b5] bg-[#eef3f6]"><TableauMark size={16} mono="#4b8fc0" /></div>
        <span className="ml-[5px] text-[14px] leading-5 tracking-[0.1px] text-[#8f8f8f]">Tableau Public - Capstone Project</span>
        <div className="ml-auto flex items-center pr-[25px]">
          <Ico w={14} h={14} s="#888"><path d="M1 6.500h12" strokeWidth="1" /></Ico>
          <div className="ml-11 flex"><Ico w={14} h={14} s="#888"><rect x="1" y="3.500" width="9.500" height="9.500" rx="1" strokeWidth="1" /><path d="M4 1.500h7q2 0 2 2v6.500" strokeWidth="1" /></Ico></div>
          <div className="ml-[45px] flex"><Ico w={14} h={14} s="#888"><path d="M1 1l12 12M13 1L1 13" strokeWidth="1.100" /></Ico></div>
        </div>
      </div>
      <div className="flex h-[25px] bg-white pl-2 text-[14px] leading-[27px] tracking-[0.08px] text-[#9a9a9a]">
        {menu.map(([m, w]) => <div key={m} className={w}>{m}</div>)}
      </div>
      <Toolbar />
      <div className="flex h-[852px]">
        <DataPane />
        <Cards />
        <div className="flex w-[1446px] flex-col gap-[6px]">
          <Shelf label="Columns" pill="Age new"><svg width="13" height="14" viewBox="0 0 13 14" fill="#555"><path d="M1 0h2v2H1zM5.500 0h2v2h-2zM10 0h2v2h-2zM1 4h2v9H1zM5.500 4h2v9h-2zM10 4h2v9h-2z" /></svg></Shelf>
          <Shelf label="Rows" pill="Measure Names"><svg width="13" height="14" viewBox="0 0 13 14" fill="#555"><path d="M0 1h2v2H0zM0 5.500h2v2H0zM0 10h2v2H0zM4 1h9v2H4zM4 5.500h9v2H4zM4 10h9v2H4z" /></svg></Shelf>
          <div className="flex items-start gap-[6px]">
            <HeatMap />
            <div className="h-[81px] w-[194px] border border-[#d0d0d0] bg-white text-[#444]">
              <div className="h-[35px] bg-[#fafafa] pl-[7px] text-[15px] leading-[34px] tracking-[-0.1px]">Measure Values</div>
              <div className="mx-1 mt-1 h-4 border border-[#9aa696] bg-[linear-gradient(90deg,#b3e0a6,#8ed07f_17%,#67af5c_42%,#519c51_58%,#308344_79%,#24693d)]" />
              <div className="flex justify-between pl-1 pr-[5px] text-[15px] leading-[23px] tracking-[0.25px]"><span>0.0</span><span>149.5</span></div>
            </div>
          </div>
        </div>
      </div>
      <SheetTabs />
      <StatusBar />
      <Taskbar />
    </div>
  );
}
